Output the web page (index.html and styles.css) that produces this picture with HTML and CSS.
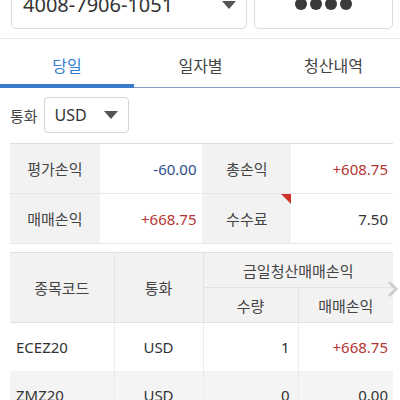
FILE: index.html
```html
<!DOCTYPE html>
<html lang="ko">
<head>
  <meta charset="utf-8">
  <title>당일 청산</title>
  <link rel="stylesheet" href="styles.css">
</head>
<body>
  <header class="acct">
    <div class="box acct-no">
      <span>4008-7906-1051</span>
      <i class="caret"></i>
    </div>
    <div class="box pw">
      <b></b><b></b><b></b><b></b>
    </div>
  </header>

  <nav class="tabs">
    <a class="on">당일</a>
    <a>일자별</a>
    <a>청산내역</a>
  </nav>

  <div class="cur">
    <label>통화</label>
    <div class="sel">
      <span>USD</span>
      <i class="caret"></i>
    </div>
  </div>

  <table class="sum">
    <tr>
      <th>평가손익</th>
      <td class="minus">-60.00</td>
      <th>총손익</th>
      <td class="plus">+608.75</td>
    </tr>
    <tr>
      <th>매매손익</th>
      <td class="plus">+668.75</td>
      <th class="flag">수수료</th>
      <td>7.50</td>
    </tr>
  </table>

  <div class="list">
    <table>
      <colgroup>
        <col class="c1"><col class="c2"><col class="c3"><col class="c4">
      </colgroup>
      <tr class="h1">
        <th rowspan=2>종목코드</th>
        <th rowspan=2>통화</th>
        <th colspan=2>금일청산매매손익</th>
      </tr>
      <tr class="h2">
        <th>수량</th>
        <th>매매손익</th>
      </tr>
      <tr>
        <td class="code">ECEZ20</td>
        <td class="mid">USD</td>
        <td>1</td>
        <td class="plus">+668.75</td>
      </tr>
      <tr class="alt">
        <td class="code">ZMZ20</td>
        <td class="mid">USD</td>
        <td>0</td>
        <td>0.00</td>
      </tr>
    </table>
    <svg class="more" width="12" height="18" viewBox="0 0 12 18">
      <path d="M2 2 L9 9 L2 16" fill="none" stroke="#cfcfcf" stroke-width="3"/>
    </svg>
  </div>
</body>
</html>
```

FILE: styles.css
```css
html, body {
  margin: 0;
  height: 400px;
  overflow: hidden;
  background: #fff;
}
body {
  font: 15px "Noto Sans", "Noto Sans CJK KR", sans-serif;
  color: #444;
}

.acct {
  display: flex;
  gap: 7px;
  padding: 0 7px 0 11px;
  height: 38px;
  border-bottom: 1px solid #e8e8e8;
}
.box {
  box-sizing: border-box;
  height: 50px;
  margin-top: -21px;
  border: 1px solid #dcdcdc;
  border-radius: 5px;
  background: #fff;
  display: flex;
  align-items: center;
}
.acct-no {
  width: 236px;
  padding: 0 10px 0 11px;
  justify-content: space-between;
  font-size: 20px;
  color: #333;
}
.acct-no .caret {
  margin-top: 2px;
}
.pw {
  flex: 1;
  justify-content: center;
  gap: 3px;
}
.pw b {
  width: 12px;
  height: 12px;
  border-radius: 50%;
  background: #3a3a3a;
}
.caret {
  width: 0;
  height: 0;
  border-left: 7px solid transparent;
  border-right: 7px solid transparent;
  border-top: 8px solid #555;
}

.tabs {
  display: flex;
  height: 48px;
  border-bottom: 1px solid #7f9fc4;
}
.tabs a {
  flex: 1;
  text-align: center;
  font-size: 16px;
  line-height: 46px;
  padding-top: 4px;
  color: #444;
}
.tabs a.on {
  color: #2f7bd0;
  border-bottom: 4px solid #3b7dc9;
  margin-bottom: -1px;
  flex: 0 0 134px;
  box-sizing: border-box;
  height: 49px;
}

.cur {
  display: flex;
  align-items: center;
  gap: 6px;
  padding: 9px 10px 0;
}
.sel {
  box-sizing: border-box;
  width: 85px;
  height: 36px;
  border: 1px solid #d4d4d4;
  border-radius: 4px;
  display: flex;
  align-items: center;
  justify-content: space-between;
  padding: 0 10px;
  font-size: 16px;
  color: #333;
}

table {
  border-collapse: collapse;
  width: 383px;
}
.sum {
  margin: 10px 0 0 10px;
  border-top: 1px solid #dedede;
  border-bottom: 1px solid #dedede;
}
.sum th, .sum td {
  height: 49px;
  padding: 0;
  border-bottom: 1px solid #e6e6e6;
  font-weight: normal;
}
.sum th {
  background: #f2f2f2;
  color: #444;
  width: 90px;
}
.sum td {
  text-align: right;
  padding-right: 6px;
  color: #333;
  width: 97px;
}
.sum th:nth-child(3) { width: 89px; }
.sum td:nth-child(4) { padding-right: 5px; }
.flag {
  position: relative;
}
.flag::after {
  content: "";
  position: absolute;
  top: 0;
  right: 0;
  border-top: 10px solid #d0322a;
  border-left: 10px solid transparent;
}
.minus { color: #2b4f8e !important; }
.plus { color: #b53434 !important; }

.list {
  position: relative;
  margin: 8px 0 0 10px;
}
.list table {
  table-layout: fixed;
  border-top: 1px solid #dedede;
}
.c1 { width: 104px; }
.c2 { width: 89px; }
.c3 { width: 95px; }
.c4 { width: 95px; }
.list th {
  background: #f2f2f2;
  font-weight: normal;
  color: #444;
  border: 1px solid #e2e2e2;
  border-top: 0;
  padding: 0;
}
.list tr th:first-child, .list tr td:first-child { border-left: 0; }
.list tr th:last-child, .list tr td:last-child { border-right: 0; }
.h1 th { height: 34px; }
.h2 th { height: 34px; }
.list td {
  height: 48px;
  padding: 0 8px 0 0;
  text-align: right;
  color: #333;
  border-left: 1px solid #ececec;
  border-right: 1px solid #ececec;
}
.list td.code {
  text-align: left;
  padding-left: 6px;
}
.list td.mid {
  text-align: center;
  padding: 0;
}
.list td:last-child { padding-right: 5px; }
.list tr.alt td { background: #f4f4f4; }
.more {
  position: absolute;
  right: 1px;
  top: 28px;
}
```
